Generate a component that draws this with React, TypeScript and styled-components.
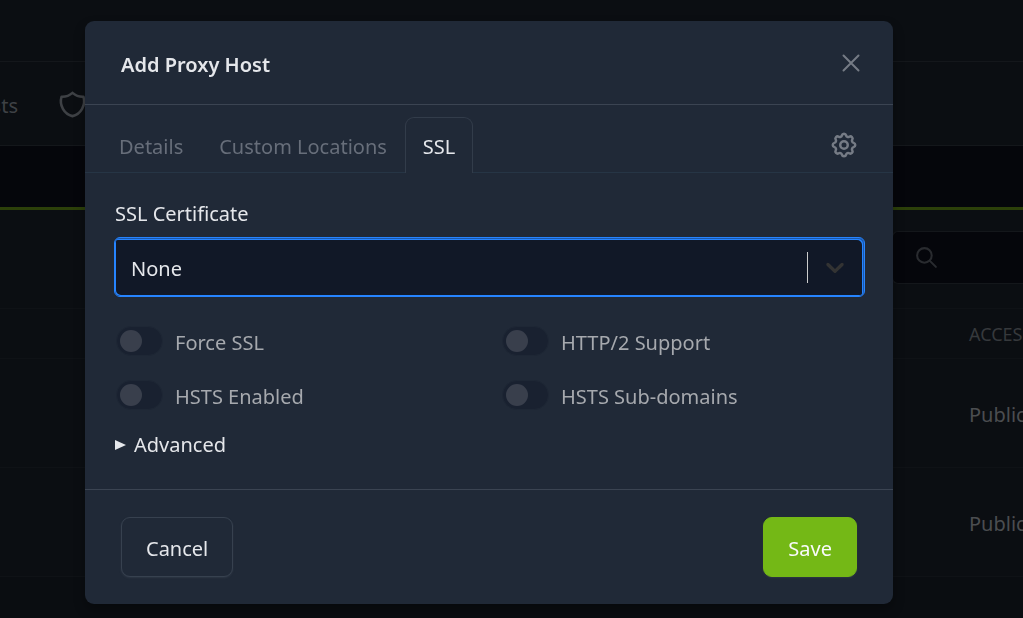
import React from "react";
import styled, { createGlobalStyle } from "styled-components";

const GlobalStyle = createGlobalStyle`
  *, *::before, *::after { box-sizing: border-box; }
  html, body { margin: 0; height: 100%; background: #0a0d11; overflow: hidden; }
  body, button, input, select, textarea {
    font-family: "Noto Sans", "Open Sans", "Liberation Sans", sans-serif;
    font-size: 20px;
    line-height: 30px;
  }
`;

/* ---------- page behind the dialog ---------- */

const Page = styled.div`
  min-height: 100vh;
  overflow: hidden;
  background: #0a0d11;
  color: #4b4d50;
`;

const TopBar = styled.header`
  height: 62px;
  background: #0b0e12;
  border-bottom: 1px solid #14171b;
`;

const MainNav = styled.nav`
  display: flex;
  align-items: center;
  gap: 39px;
  height: 84px;
  padding-top: 2px;
  background: #0b0e12;
  border-bottom: 1px solid #14171b;
`;

const NavLink = styled.a<{ $clipped?: boolean }>`
  display: flex;
  justify-content: flex-end;
  width: ${(p) => (p.$clipped ? "18px" : "auto")};
  padding-top: ${(p) => (p.$clipped ? "2px" : "0")};
  color: #3e4145;
  text-decoration: none;
`;

const Band = styled.div`
  height: 61px;
  background: #05060b;
`;

const HostsCard = styled.section`
  border-top: 3px solid #2c400a;
  background: #0b0e12;
`;

const CardHead = styled.div`
  display: flex;
  justify-content: flex-end;
  padding: 21px 0 24px;
`;

const SearchField = styled.label`
  display: flex;
  align-items: center;
  flex: 0 0 131px;
  gap: 12px;
  height: 53px;
  padding-left: 21px;
  border: 1px solid #14171b;
  border-right: 0;
  border-radius: 6px 0 0 6px;
  background: #05060b;
  color: #292b2f;
  svg {
    flex: none;
  }
`;

const SearchInput = styled.input`
  flex: 1;
  min-width: 0;
  width: 0;
  padding: 0;
  border: 0;
  outline: 0;
  background: transparent;
  color: inherit;
`;

const HostTable = styled.table`
  width: 100%;
  table-layout: fixed;
  border-collapse: collapse;
  text-align: left;
`;

const HeadCell = styled.th`
  height: 50px;
  padding: 0;
  border-top: 1px solid #0f1216;
  border-bottom: 1px solid #0f1216;
  color: #36393c;
  font-size: 18px;
  font-weight: 400;
  white-space: nowrap;
`;

const Cell = styled.td`
  height: 109px;
  padding: 4px 0 0;
  border-bottom: 1px solid #0f1216;
  white-space: nowrap;
`;

const WideCol = styled.col``;
const AccessCol = styled.col`
  width: 54px;
`;

/* ---------- dialog ---------- */

const Overlay = styled.div`
  position: fixed;
  inset: 0;
  padding: 21px 130px 14px 85px;
`;

const Dialog = styled.div`
  border-radius: 9px;
  background: #202937;
  color: #e5e7eb;
  box-shadow: 0 6px 12px rgba(0, 0, 0, 0.3);
`;

const DialogHeader = styled.div`
  display: flex;
  align-items: center;
  justify-content: space-between;
  height: 84px;
  padding: 0 27px 0 36px;
  border-bottom: 1px solid #3b4452;
`;

const DialogTitle = styled.h1`
  margin: 0;
  padding-top: 4px;
  font-size: 20px;
  font-weight: 600;
`;

const IconButton = styled.button`
  display: flex;
  padding: 0;
  border: 0;
  background: transparent;
  color: #757b85;
  cursor: pointer;
`;

const TabBar = styled.div`
  display: flex;
  align-items: flex-end;
  height: 68px;
  padding: 0 34px 0 16px;
  border-bottom: 1px solid #263545;
`;

const Tab = styled.button<{ $active?: boolean }>`
  height: 56px;
  margin-bottom: -1px;
  padding: 2px 17px 0;
  border: 1px solid ${(p) => (p.$active ? "#323c4a" : "transparent")};
  border-bottom: 0;
  border-radius: 9px 9px 0 0;
  background: ${(p) => (p.$active ? "#202937" : "transparent")};
  color: ${(p) => (p.$active ? "#e5e7eb" : "#676e7a")};
`;

const TabActions = styled.div`
  margin-left: auto;
  padding-bottom: 12px;
`;

const DialogBody = styled.div`
  padding: 26px 28px 29px 29px;
`;

const FieldLabel = styled.label`
  display: block;
  margin-bottom: 8px;
  padding-left: 1px;
`;

const SelectBox = styled.div`
  display: grid;
  align-items: center;
  height: 60px;
  border: 1px solid #2684ff;
  border-radius: 6px;
  background: #111827;
  box-shadow: inset -1px 1px 0 #1b58ab, inset -2px 2px 0 #2684ff,
    inset 1px -1px 0 #2684ff;
  & > * {
    grid-area: 1 / 1;
  }
`;

const NativeSelect = styled.select`
  width: 100%;
  height: 100%;
  padding: 4px 72px 0 16px;
  border: 0;
  outline: 0;
  appearance: none;
  background: transparent;
  color: #e5e7eb;
`;

const SelectIndicator = styled.span`
  display: flex;
  align-items: center;
  justify-self: end;
  height: 31px;
  padding: 0 14px 0 12px;
  border-left: 1px solid #cccccc;
  color: #333333;
  pointer-events: none;
`;

const ToggleGrid = styled.div`
  display: grid;
  grid-template-columns: 1fr 1fr;
  gap: 20px 21px;
  margin: 27px 0 18px;
`;

const ToggleLabel = styled.label`
  display: flex;
  align-items: center;
  gap: 12px;
  padding-left: 2px;
  color: #a6a9ae;
`;

const ToggleText = styled.span`
  padding-top: 4px;
`;

const Toggle = styled.input`
  display: flex;
  align-items: center;
  width: 47px;
  height: 30px;
  margin: 0;
  padding: 0 3px;
  border: 1px solid #1e2735;
  border-radius: 15px;
  appearance: none;
  background: #192130;
  &::before {
    content: "";
    width: 22px;
    height: 22px;
    border-radius: 50%;
    background: #393f4c;
  }
  &:checked::before {
    margin-left: auto;
  }
`;

const Advanced = styled.details``;

const AdvancedSummary = styled.summary`
  display: flex;
  align-items: center;
  gap: 8px;
  padding-left: 1px;
  list-style: none;
  cursor: pointer;
  &::before {
    content: "";
    border-left: 11px solid #e5e7eb;
    border-top: 5px solid transparent;
    border-bottom: 5px solid transparent;
  }
`;

const DialogFooter = styled.div`
  display: flex;
  justify-content: space-between;
  padding: 27px 36px;
  border-top: 1px solid #3b4452;
`;

const Button = styled.button<{ $primary?: boolean }>`
  height: 60px;
  padding: 4px 24px 0;
  border: 1px solid ${(p) => (p.$primary ? "#74b816" : "#37414f")};
  border-radius: 9px;
  background: ${(p) => (p.$primary ? "#74b816" : "#202937")};
  color: ${(p) => (p.$primary ? "#f9fafb" : "#e5e7eb")};
  box-shadow: 0 1px 2px rgba(75, 85, 99, 0.3);
`;

/* ---------- icons ---------- */

type IconProps = { size: number; stroke?: number; children: React.ReactNode };

const LineIcon = ({ size, stroke = 2, children }: IconProps) => (
  <svg
    width={size}
    height={size}
    viewBox="0 0 24 24"
    fill="none"
    stroke="currentColor"
    strokeWidth={stroke}
    strokeLinecap="round"
    strokeLinejoin="round"
    aria-hidden="true"
  >
    {children}
  </svg>
);

const ShieldIcon = () => (
  <LineIcon size={31}>
    <path d="M12 3a12 12 0 0 0 8.5 3a12 12 0 0 1 -8.5 15a12 12 0 0 1 -8.5 -15a12 12 0 0 0 8.5 -3" />
  </LineIcon>
);

const SearchIcon = () => (
  <LineIcon size={25}>
    <path d="M3 10a7 7 0 1 0 14 0a7 7 0 1 0 -14 0" />
    <path d="M21 21l-6 -6" />
  </LineIcon>
);

const GearIcon = () => (
  <LineIcon size={30}>
    <path d="M10.325 4.317c.426 -1.756 2.924 -1.756 3.35 0a1.724 1.724 0 0 0 2.573 1.066c1.543 -.94 3.31 .826 2.37 2.37a1.724 1.724 0 0 0 1.065 2.572c1.756 .426 1.756 2.924 0 3.35a1.724 1.724 0 0 0 -1.066 2.573c.94 1.543 -.826 3.31 -2.37 2.37a1.724 1.724 0 0 0 -2.572 1.065c-.426 1.756 -2.924 1.756 -3.35 0a1.724 1.724 0 0 0 -2.573 -1.066c-1.543 .94 -3.31 -.826 -2.37 -2.37a1.724 1.724 0 0 0 -1.065 -2.572c-1.756 -.426 -1.756 -2.924 0 -3.35a1.724 1.724 0 0 0 1.066 -2.573c-.94 -1.543 .826 -3.31 2.37 -2.37c1 .608 2.296 .07 2.572 -1.065z" />
    <path d="M9 12a3 3 0 1 0 6 0a3 3 0 0 0 -6 0" />
  </LineIcon>
);

const CloseIcon = () => (
  <LineIcon size={30} stroke={1.6}>
    <path d="M6 6l12 12M18 6l-12 12" />
  </LineIcon>
);

const ChevronIcon = () => (
  <svg width="30" height="30" viewBox="0 0 20 20" fill="currentColor" aria-hidden="true">
    <path d="M4.516 7.548c0.436-0.446 1.043-0.481 1.576 0l3.908 3.747 3.908-3.747c0.533-0.481 1.141-0.446 1.574 0 0.436 0.445 0.408 1.197 0 1.615-0.406 0.418-4.695 4.502-4.695 4.502-0.217 0.223-0.502 0.335-0.787 0.335s-0.57-0.112-0.789-0.335c0 0-4.287-4.084-4.695-4.502s-0.436-1.17 0-1.615z" />
  </svg>
);

const options = ["Force SSL", "HTTP/2 Support", "HSTS Enabled", "HSTS Sub-domains"];
const hosts = ["Public", "Public"];

export default function App() {
  return (
    <>
      <GlobalStyle />
      <Page>
        <TopBar />
        <MainNav>
          <NavLink href="#hosts" $clipped>
            Hosts
          </NavLink>
          <NavLink href="#access" aria-label="Access">
            <ShieldIcon />
          </NavLink>
        </MainNav>
        <Band />
        <HostsCard>
          <CardHead>
            <SearchField>
              <SearchIcon />
              <SearchInput type="text" aria-label="Search" />
            </SearchField>
          </CardHead>
          <HostTable>
            <colgroup>
              <WideCol />
              <AccessCol />
            </colgroup>
            <thead>
              <tr>
                <HeadCell />
                <HeadCell>ACCESS</HeadCell>
              </tr>
            </thead>
            <tbody>
              {hosts.map((access, i) => (
                <tr key={i}>
                  <Cell />
                  <Cell>{access}</Cell>
                </tr>
              ))}
            </tbody>
          </HostTable>
        </HostsCard>
      </Page>

      <Overlay>
        <Dialog role="dialog" aria-labelledby="dialog-title">
          <DialogHeader>
            <DialogTitle id="dialog-title">Add Proxy Host</DialogTitle>
            <IconButton aria-label="Close">
              <CloseIcon />
            </IconButton>
          </DialogHeader>
          <TabBar role="tablist">
            <Tab role="tab">Details</Tab>
            <Tab role="tab">Custom Locations</Tab>
            <Tab role="tab" aria-selected="true" $active>
              SSL
            </Tab>
            <TabActions>
              <IconButton aria-label="Settings">
                <GearIcon />
              </IconButton>
            </TabActions>
          </TabBar>
          <DialogBody>
            <FieldLabel htmlFor="certificate">SSL Certificate</FieldLabel>
            <SelectBox>
              <NativeSelect id="certificate" defaultValue="None">
                <option>None</option>
              </NativeSelect>
              <SelectIndicator>
                <ChevronIcon />
              </SelectIndicator>
            </SelectBox>
            <ToggleGrid>
              {options.map((name) => (
                <ToggleLabel key={name}>
                  <Toggle type="checkbox" />
                  <ToggleText>{name}</ToggleText>
                </ToggleLabel>
              ))}
            </ToggleGrid>
            <Advanced>
              <AdvancedSummary>Advanced</AdvancedSummary>
            </Advanced>
          </DialogBody>
          <DialogFooter>
            <Button>Cancel</Button>
            <Button $primary>Save</Button>
          </DialogFooter>
        </Dialog>
      </Overlay>
    </>
  );
}
